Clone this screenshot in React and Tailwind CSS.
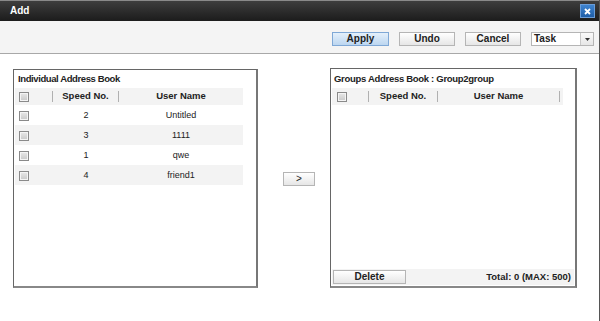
import React from "react";

const F = { fontFamily: '"Liberation Sans", Arial, sans-serif' };

function Check() {
  return (
    <span className="inline-block w-[10px] h-[10px] border border-[#8a8a8a] bg-gradient-to-b from-[#e8e8e8] to-[#c8c8c8] shadow-[inset_0_0_0_1px_#f4f4f4]" />
  );
}

function Btn({ children, className = "" }) {
  return (
    <button
      className={
        "h-[14px] border border-[#b5b5b5] bg-gradient-to-b from-[#ffffff] to-[#e6e6e6] text-[10px] font-bold text-[#222] leading-[12px] flex items-center justify-center " +
        className
      }
    >
      {children}
    </button>
  );
}

function Sep() {
  return <span className="w-px h-[11px] bg-[#b0b0b0]" />;
}

export default function App() {
  const rows = [
    ["2", "Untitled"],
    ["3", "1111"],
    ["1", "qwe"],
    ["4", "friend1"],
  ];
  return (
    <div className="w-[600px] h-[321px] bg-white text-[#222] overflow-hidden border-r border-[#555] relative" style={F}>
      {/* title bar */}
      <div className="h-[21px] border-t border-[#8a8a8a] bg-gradient-to-b from-[#3e3e3e] to-[#1c1c1c] flex items-center justify-between pl-[10px] pr-[4px]">
        <span className="text-white font-bold text-[10px] leading-none">Add</span>
        <span className="w-[15px] h-[14px] bg-gradient-to-b from-[#3f84cf] to-[#1e5ea8] border border-[#6a9cd6] flex items-center justify-center">
          <svg width="7" height="7" viewBox="0 0 7 7">
            <path d="M1 1L6 6M6 1L1 6" stroke="white" strokeWidth="1.8" />
          </svg>
        </span>
      </div>
      {/* toolbar */}
      <div className="h-[33px] bg-[#f4f4f4] border-b border-[#a8a8a8] flex items-start justify-end gap-[10px] pt-[11px] pr-[5px]">
        <button className="w-[57px] h-[14px] border border-[#7fa8d6] bg-gradient-to-b from-[#e4f0fb] to-[#bcd6f0] text-[10px] font-bold leading-[12px]">
          Apply
        </button>
        <Btn className="w-[56px]">Undo</Btn>
        <Btn className="w-[56px]">Cancel</Btn>
        <div className="w-[63px] h-[14px] border border-[#b5b5b5] bg-white flex items-center text-[10px] font-bold">
          <span className="flex-1 pl-[2px] leading-none">Task</span>
          <span className="w-[13px] h-full border-l border-[#c8c8c8] bg-gradient-to-b from-[#fafafa] to-[#e6e6e6] flex items-center justify-center">
            <svg width="5" height="3" viewBox="0 0 5 3"><path d="M0 0H5L2.5 3Z" fill="#333" /></svg>
          </span>
        </div>
      </div>
      {/* content */}
      <div className="flex items-center pl-[13px] pt-[15px]">
        {/* left panel */}
        <div className="w-[245px] h-[219px] border border-[#666] border-b-2 border-b-[#888] border-r-2 border-r-[#777] bg-white flex flex-col">
          <div className="h-[18px] pl-[4px] pt-[4px] text-[9.5px] font-bold leading-none tracking-[-0.4px]">Individual Address Book</div>
          <div className="ml-[1px] w-[228px] h-[17px] bg-[#f3f3f3] flex items-center text-[9.5px] font-bold">
            <div className="w-[38px] flex items-center justify-between pl-[4px]"><Check /><Sep /></div>
            <div className="w-[66px] flex items-center justify-between"><span className="flex-1 text-center">Speed No.</span><Sep /></div>
            <div className="flex-1 text-center">User Name</div>
          </div>
          {rows.map(([n, name], i) => (
            <div key={i} className={"ml-[1px] w-[228px] h-[20px] pt-[1px] flex items-center text-[9px] " + (i % 2 ? "bg-[#f3f3f3]" : "bg-white")}>
              <div className="w-[38px] pl-[4px] flex items-center"><Check /></div>
              <div className="w-[66px] text-center">{n}</div>
              <div className="flex-1 text-center">{name}</div>
            </div>
          ))}
        </div>
        {/* middle */}
        <div className="w-[72px] flex items-center pl-[25px]">
          <Btn className="w-[32px] font-normal">&gt;</Btn>
        </div>
        {/* right panel */}
        <div className="w-[247px] h-[220px] -mt-[1px] border border-[#666] border-b-2 border-b-[#888] border-r-2 border-r-[#777] bg-white flex flex-col">
          <div className="h-[19px] pl-[3px] pt-[5px] text-[9.5px] font-bold leading-none tracking-[-0.3px]">Groups Address Book : Group2group</div>
          <div className="ml-[1px] w-[231px] h-[17px] bg-[#f3f3f3] flex items-center text-[9.5px] font-bold">
            <div className="w-[37px] flex items-center justify-between pl-[5px]"><Check /><Sep /></div>
            <div className="w-[69px] flex items-center justify-between"><span className="flex-1 text-center">Speed No.</span><Sep /></div>
            <div className="w-[122px] flex items-center justify-between"><span className="flex-1 text-center">User Name</span><Sep /></div>
          </div>
          <div className="flex-1" />
          <div className="h-[16px] mb-[1px] mx-[1px] bg-[#f3f3f3] flex items-center justify-between pr-[3px]">
            <Btn className="w-[73px] ml-[1px]">Delete</Btn>
            <span className="text-[9.5px] font-bold">Total: 0 (MAX: 500)</span>
          </div>
        </div>
      </div>
    </div>
  );
}
